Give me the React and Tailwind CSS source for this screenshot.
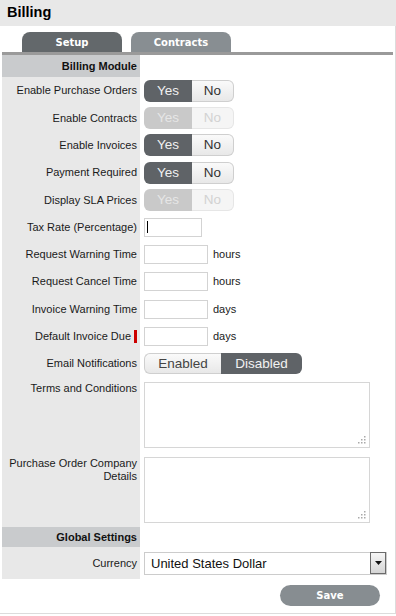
import React from 'react'

const rows = [
  { label: 'Enable Purchase Orders', kind: 'yn' },
  { label: 'Enable Contracts', kind: 'yn', disabled: true },
  { label: 'Enable Invoices', kind: 'yn' },
  { label: 'Payment Required', kind: 'yn' },
  { label: 'Display SLA Prices', kind: 'yn', disabled: true },
  { label: 'Tax Rate (Percentage)', kind: 'input', small: true, caret: true },
  { label: 'Request Warning Time', kind: 'input', unit: 'hours' },
  { label: 'Request Cancel Time', kind: 'input', unit: 'hours' },
  { label: 'Invoice Warning Time', kind: 'input', unit: 'days' },
  { label: 'Default Invoice Due', kind: 'input', unit: 'days', required: true },
  { label: 'Email Notifications', kind: 'email' },
]

function YesNo({ disabled }) {
  return (
    <div className="flex h-[22px] text-[13.5px] leading-none">
      <div
        className={`w-[48px] flex items-center justify-center rounded-l-[6px] ${
          disabled ? 'bg-[#c9c9c9] text-[#e6e6e6]' : 'bg-[#5f6367] text-[#f0f0f0]'
        }`}>
        Yes
      </div>
      <div
        className={`w-[42px] flex items-center justify-center rounded-r-[6px] border border-l-0 ${
          disabled
            ? 'bg-[#f5f5f5] text-[#d2d2d2] border-[#e6e6e6]'
            : 'bg-gradient-to-b from-[#fafafa] to-[#e8e8e8] text-[#333] border-[#cfcfcf]'
        }`}>
        No
      </div>
    </div>
  )
}

function EmailToggle() {
  return (
    <div className="flex h-[21px] text-[13.5px] leading-none">
      <div className="w-[77px] flex items-center justify-center rounded-l-[6px] border border-r-0 border-[#cfcfcf] bg-gradient-to-b from-[#fafafa] to-[#e8e8e8] text-[#444]">
        Enabled
      </div>
      <div className="w-[81px] flex items-center justify-center rounded-r-[6px] bg-[#5f6367] text-[#f2f2f2]">
        Disabled
      </div>
    </div>
  )
}

function Grip() {
  const dots = [[6, 0], [3, 3], [6, 3], [0, 6], [3, 6], [6, 6]]
  return (
    <svg className="absolute right-[3px] bottom-[3px]" width="8" height="8" viewBox="0 0 8 8">
      {dots.map(([x, y]) => (
        <rect key={`${x}-${y}`} x={x} y={y} width="1.5" height="1.5" fill="#a9a9a9" />
      ))}
    </svg>
  )
}

function Label({ children, top, className = '' }) {
  return (
    <div
      className={`w-[138px] shrink-0 bg-[#e8e8e8] pr-[3px] flex justify-end text-right ${
        top ? 'items-start pt-[5px]' : 'items-center'
      } ${className}`}>
      {children}
    </div>
  )
}

function Section({ children, className = '' }) {
  return (
    <div className={`flex ${className}`}>
      <div className="w-[138px] bg-[#c9cbcd] pr-[3px] flex items-center justify-end font-bold text-[11px] text-[#111]">
        {children}
      </div>
    </div>
  )
}

export default function App() {
  return (
    <div className="w-[396px] h-[616px] bg-white text-[#1a1a1a] font-['Liberation_Sans',Arial,sans-serif] overflow-hidden">
      <div className="h-[26px] bg-[#e8e8e8] px-[7px] flex items-center">
        <h1 className="font-bold text-[14.5px] text-black">Billing</h1>
      </div>

      <div className="h-[588px] border-r border-b border-[#dcdcdc] flex flex-col">
        {/* Tabs */}
        <div className="flex gap-[9px] pl-[22px] pt-[6px] font-['DejaVu_Sans',Verdana,sans-serif] font-bold text-[10px] text-white">
          <div className="w-[100px] h-[20px] rounded-t-[8px] bg-[#63686b] flex items-center justify-center">
            Setup
          </div>
          <div className="w-[100px] h-[20px] rounded-t-[8px] bg-[#888e92] flex items-center justify-center">
            Contracts
          </div>
        </div>
        <div className="mx-[2px] h-[3px] bg-[#9a9a9a]" />

        <div className="pl-[2px] flex flex-col">
          <Section className="h-[22px]">Billing Module</Section>

          {rows.map((r) => (
            <div key={r.label} className="flex h-[27.3px] text-[11px]">
              <Label>
                {r.label}
                {r.required && <span className="ml-[3px] w-[3px] h-[13px] bg-[#cc0000]" />}
              </Label>
              <div className="flex items-center pl-[4px]">
                {r.kind === 'yn' && <YesNo disabled={r.disabled} />}
                {r.kind === 'email' && <EmailToggle />}
                {r.kind === 'input' && (
                  <>
                    <div
                      className={`h-[19px] border border-[#d3d3d3] bg-white flex items-center pl-[2px] ${
                        r.small ? 'w-[58px]' : 'w-[64px]'
                      }`}>
                      {r.caret && <span className="w-px h-[12px] bg-black" />}
                    </div>
                    {r.unit && <span className="ml-[5px] text-[11px]">{r.unit}</span>}
                  </>
                )}
              </div>
            </div>
          ))}

          {['Terms and Conditions', 'Purchase Order Company Details'].map((l) => (
            <div key={l} className="flex h-[75px] text-[11px]">
              <Label top className="leading-[12.5px]">
                {l}
              </Label>
              <div className="pl-[4px] pt-[4.5px]">
                <div className="relative w-[226px] h-[66px] border border-[#d6d6d6] bg-white">
                  <Grip />
                </div>
              </div>
            </div>
          ))}

          <Section className="h-[20px]">Global Settings</Section>

          <div className="flex h-[32px] text-[11px]">
            <Label>Currency</Label>
            <div className="flex items-center pl-[4px]">
              <div className="w-[243px] h-[23px] border border-[#cccccc] bg-white flex items-center justify-between">
                <span className="pl-[6px] text-[13px] text-[#111]">United States Dollar</span>
                <div className="w-[16px] h-[22px] border border-[#6b6b6b] bg-gradient-to-b from-[#f6f6f6] to-[#d5d5d5] flex items-center justify-center">
                  <svg width="7" height="4" viewBox="0 0 7 4">
                    <path d="M0 0h7L3.5 4z" fill="#111" />
                  </svg>
                </div>
              </div>
            </div>
          </div>
        </div>

        <div className="flex justify-end pr-[15px] pt-[6px]">
          <button className="w-[100px] h-[21px] rounded-full bg-[#878d91] text-white font-['DejaVu_Sans',Verdana,sans-serif] font-bold text-[10px]">
            Save
          </button>
        </div>
      </div>
    </div>
  )
}
